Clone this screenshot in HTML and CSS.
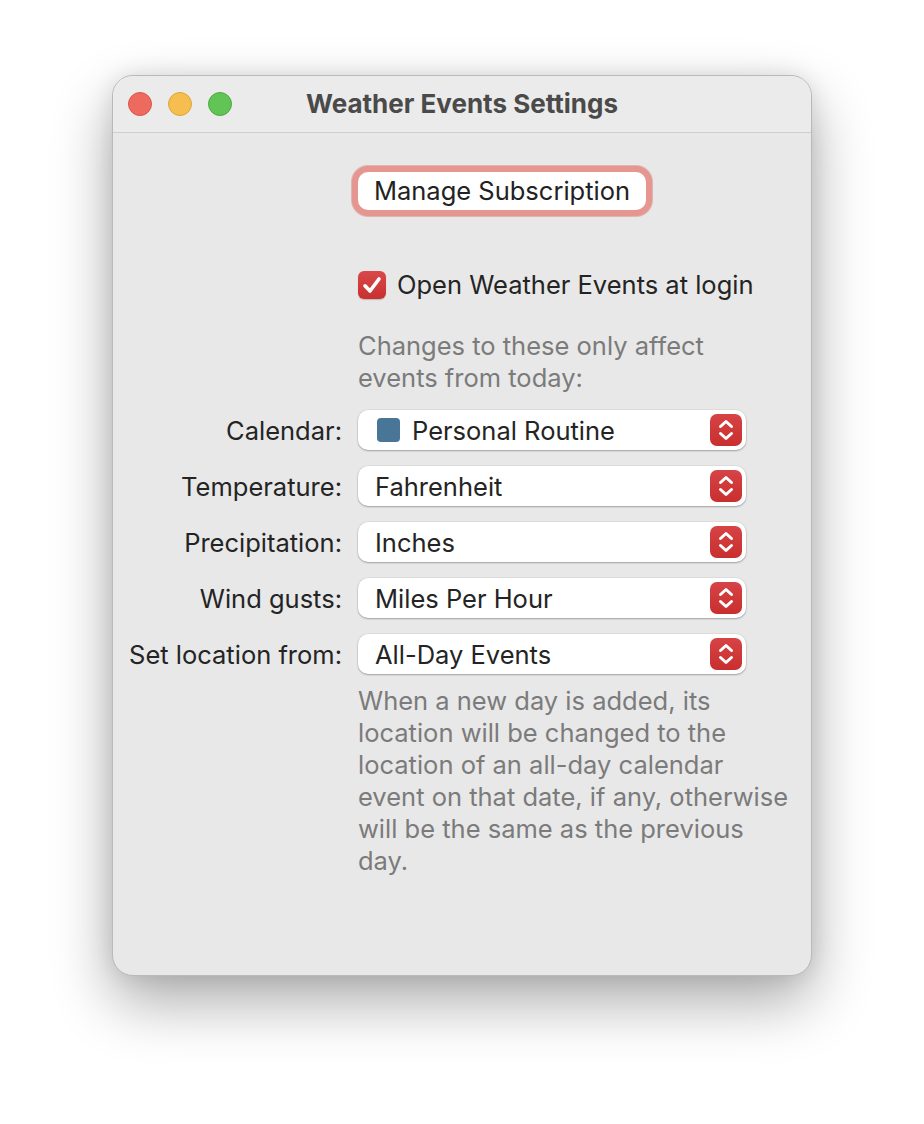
FILE: index.html
```html
<!DOCTYPE html>
<html>
<head>
<meta charset="utf-8">
<link rel="stylesheet" href="styles.css">
</head>
<body>
<div class="window">
  <div class="titlebar">
    <div class="lights">
      <span class="light red"></span>
      <span class="light yellow"></span>
      <span class="light green"></span>
    </div>
    <div class="title">Weather Events Settings</div>
    <div></div>
  </div>
  <div class="content">
    <div class="row single btn-row">
      <div></div>
      <div><button class="push">Manage Subscription</button></div>
    </div>
    <div class="row single check-row">
      <div></div>
      <label class="check">
        <span class="box"><svg viewBox="0 0 28 28" width="28" height="28"><path d="M7 14.8 L12 20 L21 8" fill="none" stroke="#fff" stroke-width="3.6" stroke-linecap="round" stroke-linejoin="round"/></svg></span>
        <span>Open Weather Events at login</span>
      </label>
    </div>
    <div class="row single note-row">
      <div></div>
      <p class="note">Changes to these only affect<br>events from today:</p>
    </div>
    <div class="fields">
      <div class="row field">
        <span class="label">Calendar:</span>
        <div class="popup"><span class="swatch"></span><span class="ptext">Personal Routine</span><span class="stepper"><svg viewBox="0 0 32 32" width="32" height="32"><path d="M10.5 12.5 L16 7.5 L21.5 12.5 M10.5 19.5 L16 24.5 L21.5 19.5" fill="none" stroke="#fff" stroke-width="3" stroke-linecap="round" stroke-linejoin="round"/></svg></span></div>
      </div>
      <div class="row field">
        <span class="label">Temperature:</span>
        <div class="popup"><span class="ptext">Fahrenheit</span><span class="stepper"><svg viewBox="0 0 32 32" width="32" height="32"><path d="M10.5 12.5 L16 7.5 L21.5 12.5 M10.5 19.5 L16 24.5 L21.5 19.5" fill="none" stroke="#fff" stroke-width="3" stroke-linecap="round" stroke-linejoin="round"/></svg></span></div>
      </div>
      <div class="row field">
        <span class="label">Precipitation:</span>
        <div class="popup"><span class="ptext">Inches</span><span class="stepper"><svg viewBox="0 0 32 32" width="32" height="32"><path d="M10.5 12.5 L16 7.5 L21.5 12.5 M10.5 19.5 L16 24.5 L21.5 19.5" fill="none" stroke="#fff" stroke-width="3" stroke-linecap="round" stroke-linejoin="round"/></svg></span></div>
      </div>
      <div class="row field">
        <span class="label">Wind gusts:</span>
        <div class="popup"><span class="ptext">Miles Per Hour</span><span class="stepper"><svg viewBox="0 0 32 32" width="32" height="32"><path d="M10.5 12.5 L16 7.5 L21.5 12.5 M10.5 19.5 L16 24.5 L21.5 19.5" fill="none" stroke="#fff" stroke-width="3" stroke-linecap="round" stroke-linejoin="round"/></svg></span></div>
      </div>
      <div class="row field">
        <span class="label">Set location from:</span>
        <div class="popup"><span class="ptext">All-Day Events</span><span class="stepper"><svg viewBox="0 0 32 32" width="32" height="32"><path d="M10.5 12.5 L16 7.5 L21.5 12.5 M10.5 19.5 L16 24.5 L21.5 19.5" fill="none" stroke="#fff" stroke-width="3" stroke-linecap="round" stroke-linejoin="round"/></svg></span></div>
      </div>
    </div>
    <div class="row single desc-row">
      <div></div>
      <p class="note desc">When a new day is added, its location will be changed to the location of an all-day calendar event on that date, if any, otherwise will be the same as the previous day.</p>
    </div>
  </div>
</div>
</body>
</html>
```

FILE: styles.css
```css
* { box-sizing: border-box; }
html, body {
  margin: 0;
  background: #ffffff;
}
body {
  width: 924px;
  height: 1124px;
  padding: 75px 0 0 112px;
  font-family: Inter, "Noto Sans", "Liberation Sans", sans-serif;
  color: #242424;
}
.window {
  width: 700px;
  height: 901px;
  border-radius: 21px;
  background: #e8e8e8;
  border: 1px solid #b9b9b9;
  box-shadow: 0 26px 60px rgba(0,0,0,0.33), 0 0 22px rgba(0,0,0,0.10);
  overflow: hidden;
}
.titlebar {
  height: 57px;
  background: #ebebeb;
  border-bottom: 1px solid #cfcfcf;
  display: grid;
  grid-template-columns: 1fr auto 1fr;
  align-items: center;
}
.lights {
  display: flex;
  gap: 16px;
  padding-left: 15px;
}
.light {
  width: 24px;
  height: 24px;
  border-radius: 50%;
  display: block;
}
.red { background: #ee6a5f; border: 1px solid #d9564b; }
.yellow { background: #f5be4f; border: 1px solid #dea43a; }
.green { background: #61c454; border: 1px solid #4daa40; }
.title {
  font-weight: 700;
  font-size: 26px;
  color: #4a4a4a;
  padding-bottom: 2px;
}
.content {
  padding-top: 39px;
}
.row {
  display: grid;
  grid-template-columns: 229px 388px;
  column-gap: 16px;
  align-items: center;
}
.push {
  font-family: inherit;
  font-size: 25.5px;
  color: #222;
  background: #fff;
  border: none;
  border-radius: 10px;
  width: 288px;
  height: 38px;
  padding: 0 0 1px;
  box-shadow: 0 0 0 6px #e59690, 0 0 0 7px rgba(200,90,80,0.35);
}
.check-row { margin-top: 59px; }
.check {
  display: flex;
  align-items: center;
  gap: 11px;
  font-size: 25.5px;
  color: #242424;
  white-space: nowrap;
}
.box {
  width: 28px;
  height: 28px;
  border-radius: 6px;
  background: linear-gradient(#d9484a, #c9302f);
  box-shadow: 0 1px 1px rgba(0,0,0,0.2);
  display: block;
  flex: none;
}
.box svg { display: block; }
.note {
  margin: 0;
  font-size: 25.5px;
  line-height: 32px;
  color: #7b7b7b;
  white-space: nowrap;
}
.note-row { margin-top: 30px; }
.fields {
  margin-top: 16px;
  display: flex;
  flex-direction: column;
  gap: 16px;
}
.label {
  text-align: right;
  font-size: 25.5px;
  color: #242424;
  white-space: nowrap;
}
.popup {
  height: 40px;
  background: #fff;
  border-radius: 10px;
  box-shadow: 0 1px 2px rgba(0,0,0,0.28), 0 0 0 0.5px rgba(0,0,0,0.08);
  display: flex;
  align-items: center;
  padding: 0 4px 0 17px;
  font-size: 25.5px;
  color: #242424;
}
.swatch {
  width: 23px;
  height: 24px;
  background: #497596;
  border-radius: 4px;
  margin-left: 2px;
  margin-right: 12px;
}
.ptext { flex: 1; }
.stepper {
  width: 32px;
  height: 32px;
  border-radius: 7px;
  background: linear-gradient(#d64446, #c92e2e);
  display: block;
}
.stepper svg { display: block; }
.desc-row { margin-top: 11px; }
.desc { width: 436px; white-space: normal; }
```
